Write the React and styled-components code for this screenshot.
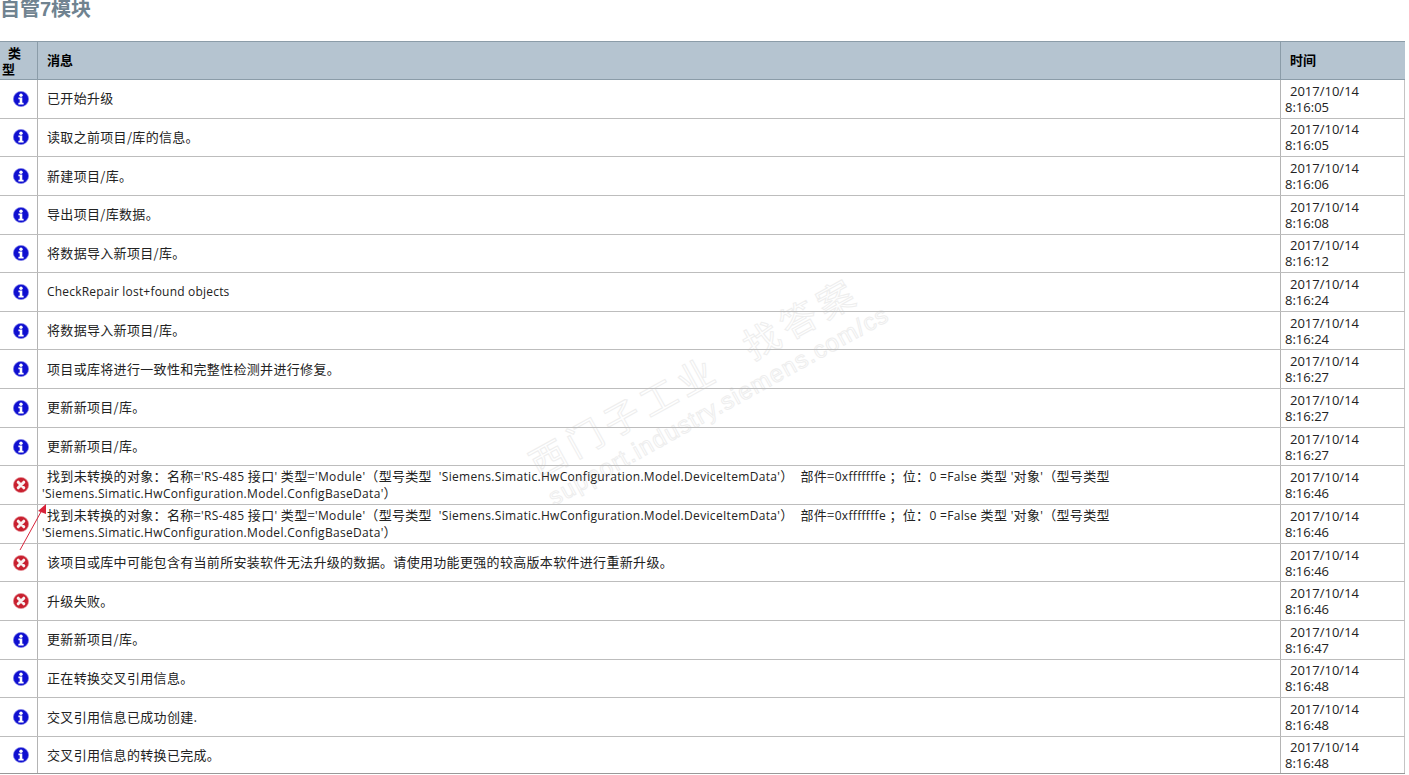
import React from "react";
import styled, { createGlobalStyle } from "styled-components";

const GlobalStyle = createGlobalStyle`
  html, body {
    margin: 0;
    padding: 0;
    background: #fff;
    overflow: hidden;
  }
`;

const Page = styled.div`
  position: relative;
  width: 1409px;
  height: 775px;
  overflow: hidden;
  font-family: "Open Sans", "Noto Sans CJK SC", sans-serif;
  font-size: 12px;
  color: #222;
`;

const Title = styled.h2`
  margin: -1px 0 22px;
  height: 20px;
  font-family: "Liberation Sans", "Noto Sans CJK SC", sans-serif;
  font-size: 20px;
  line-height: 20px;
  font-weight: bold;
  color: #708390;
`;

const Table = styled.div`
  position: relative;
  z-index: 1;
  width: 1405px;
  border-bottom: 1px solid #999;
`;

const Row = styled.div`
  display: grid;
  grid-template-columns: 38px 1243px 124px;
  height: 38.65px;
  box-sizing: border-box;
  border-bottom: 1px solid #bdbdbd;
  &:last-child {
    height: 36.5px;
    border-bottom: none;
  }
`;

const HeadRow = styled(Row)`
  height: 39px;
  background: #b5c4d0;
  border-top: 1px solid #8b9ca8;
  border-bottom: 1px solid #8b9ca8;
  font-weight: bold;
  color: #000;
`;

const Cell = styled.div`
  display: flex;
  align-items: center;
  box-sizing: border-box;
  padding-left: 4px;
  border-right: 1px solid #b4b4b4;
  &:last-child {
    border-right: 1px solid #c4c4c4;
  }
`;

const HeadCell = styled(Cell)`
  padding: 0 0 2px 9px;
  font-family: "Noto Sans CJK SC", sans-serif;
  font-size: 13px;
  border-right-color: #8b9ca8;
  &:last-child {
    border-right: none;
  }
`;

const TypeHead = styled(HeadCell)`
  display: block;
  padding: 3px 20px 0 2px;
  line-height: 16px;
  text-indent: 6px;
`;

const IconCell = styled(Cell)`
  justify-content: center;
  padding: 0 0 0 4px;
`;

const Message = styled.div`
  max-width: 1080px;
  line-height: 16px;
  text-indent: 5px;
  letter-spacing: 0.32px;
`;

const Zh = styled.span`
  font-family: "Noto Sans CJK SC", sans-serif;
  font-size: 13px;
`;

const Plain = styled.span`
  letter-spacing: 0.2px;
`;

const Time = styled.div`
  width: 100px;
  line-height: 16px;
  font-size: 13px;
  text-indent: 5px;
`;

const Watermark = styled.div`
  position: absolute;
  left: 514px;
  top: 346px;
  width: 400px;
  transform: rotate(-29deg);
  transform-origin: center;
  color: #fff;
  -webkit-text-stroke: 1px #eeeeee;
  font-family: "Noto Sans CJK SC", sans-serif;
  pointer-events: none;
`;

const MarkTitle = styled.div`
  font-size: 36px;
  line-height: 40px;
  letter-spacing: 6px;
  word-spacing: 20px;
  white-space: nowrap;
`;

const MarkUrl = styled.div`
  font-family: "Liberation Sans", sans-serif;
  font-size: 24px;
  line-height: 26px;
  letter-spacing: 1.2px;
  white-space: nowrap;
  margin-top: 6px;
`;

const ArrowOverlay = styled.svg`
  position: absolute;
  z-index: 2;
  left: 0;
  top: 490px;
`;

const InfoIcon = () => (
  <svg width="16" height="16" viewBox="0 0 16 16">
    <circle cx="8" cy="8" r="7.6" fill="#0f0fd0" stroke="#7c7ce8" strokeWidth="0.7" />
    <circle cx="8" cy="4.2" r="1.7" fill="#fff" />
    <path d="M5.4 6.6h3.9v5.2h1.3v1.7H5.4v-1.7h1.3V8.3H5.4z" fill="#fff" />
  </svg>
);

const ErrorIcon = () => (
  <svg width="16" height="16" viewBox="0 0 16 16">
    <circle cx="8" cy="8" r="7.6" fill="#c8202f" stroke="#e58a92" strokeWidth="0.7" />
    <path d="M5.2 5.2l5.6 5.6M10.8 5.2l-5.6 5.6" stroke="#f8f2f2" strokeWidth="3" strokeLinecap="round" />
  </svg>
);

const longMsg = (
  <>
    <Zh>找到未转换的对象：名称=</Zh>'RS-485 <Zh>接口</Zh>' <Zh>类型=</Zh>'Module'<Zh>（型号类型</Zh>&nbsp;{" "}
    'Siemens.Simatic.HwConfiguration.Model.DeviceItemData'<Zh>）</Zh>&nbsp; <Zh>部件=</Zh>0xfffffffe <Zh>；位：</Zh>0
    =False <Zh>类型</Zh> '<Zh>对象</Zh>'<Zh>（型号类型</Zh>{" "}
    'Siemens.Simatic.HwConfiguration.Model.ConfigBaseData'<Zh>）</Zh>
  </>
);

const rows = [
  ["info", <Zh>已开始升级</Zh>, "8:16:05"],
  ["info", <Zh>读取之前项目/库的信息。</Zh>, "8:16:05"],
  ["info", <Zh>新建项目/库。</Zh>, "8:16:06"],
  ["info", <Zh>导出项目/库数据。</Zh>, "8:16:08"],
  ["info", <Zh>将数据导入新项目/库。</Zh>, "8:16:12"],
  ["info", <Plain>CheckRepair lost+found objects</Plain>, "8:16:24"],
  ["info", <Zh>将数据导入新项目/库。</Zh>, "8:16:24"],
  ["info", <Zh>项目或库将进行一致性和完整性检测并进行修复。</Zh>, "8:16:27"],
  ["info", <Zh>更新新项目/库。</Zh>, "8:16:27"],
  ["info", <Zh>更新新项目/库。</Zh>, "8:16:27"],
  ["error", longMsg, "8:16:46"],
  ["error", longMsg, "8:16:46"],
  ["error", <Zh>该项目或库中可能包含有当前所安装软件无法升级的数据。请使用功能更强的较高版本软件进行重新升级。</Zh>, "8:16:46"],
  ["error", <Zh>升级失败。</Zh>, "8:16:46"],
  ["info", <Zh>更新新项目/库。</Zh>, "8:16:47"],
  ["info", <Zh>正在转换交叉引用信息。</Zh>, "8:16:48"],
  ["info", <Zh>交叉引用信息已成功创建.</Zh>, "8:16:48"],
  ["info", <Zh>交叉引用信息的转换已完成。</Zh>, "8:16:48"],
];

export default function App() {
  return (
    <Page>
      <GlobalStyle />
      <Title>自管7模块</Title>
      <Table>
        <HeadRow>
          <TypeHead>类型</TypeHead>
          <HeadCell>消息</HeadCell>
          <HeadCell>时间</HeadCell>
        </HeadRow>
        {rows.map(([type, msg, time], i) => (
          <Row key={i}>
            <IconCell>{type === "info" ? <InfoIcon /> : <ErrorIcon />}</IconCell>
            <Cell>
              <Message>{msg}</Message>
            </Cell>
            <Cell>
              <Time>2017/10/14 {time}</Time>
            </Cell>
          </Row>
        ))}
      </Table>
      <Watermark>
        <MarkTitle>西门子工业 找答案</MarkTitle>
        <MarkUrl>support.industry.siemens.com/cs</MarkUrl>
      </Watermark>
      <ArrowOverlay width="60" height="70" viewBox="0 0 60 70">
        <line x1="20" y1="60" x2="42" y2="20" stroke="#d8233a" strokeWidth="1" />
        <polygon points="46,14 38,21 46,24" fill="#d8233a" />
      </ArrowOverlay>
    </Page>
  );
}
